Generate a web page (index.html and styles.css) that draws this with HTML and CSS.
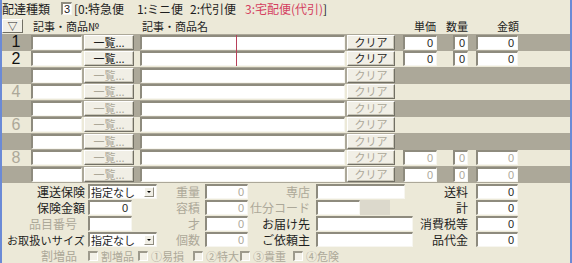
FILE: index.html
```html
<!DOCTYPE html>
<html lang="ja">
<head>
  <meta charset="UTF-8">
  <title>配達伝票</title>
  <link rel="stylesheet" href="styles.css">
</head>
<body>
  <div class="app">
    <div class="topbar">
      <span class="top-label">配達種類</span>
      <span class="field kind-field">3</span>
      <span class="kind k0">[0:特急便</span>
      <span class="kind k1">1:ミニ便</span>
      <span class="kind k2">2:代引便</span>
      <span class="kind k3"><span class="red">3:宅配便(代引)</span>]</span>
    </div>

    <div class="head">
      <span class="sort-btn">▽</span>
      <span class="h-code">記事・商品№</span>
      <span class="h-name">記事・商品名</span>
      <span class="h-price">単価</span>
      <span class="h-qty">数量</span>
      <span class="h-amount">金額</span>
    </div>

    <div class="rows">
      <span class="margin-line"></span>
      <div class="row band">
        <span class="num">1</span>
        <span class="field code"></span>
        <span class="btn list">一覧...</span>
        <span class="field name"></span>
        <span class="btn clear">クリア</span>
        <span class="field price">0</span>
        <span class="field qty">0</span>
        <span class="field amount">0</span>
      </div>
      <div class="row">
        <span class="num">2</span>
        <span class="field code"></span>
        <span class="btn list">一覧...</span>
        <span class="field name"></span>
        <span class="btn clear">クリア</span>
        <span class="field price">0</span>
        <span class="field qty">0</span>
        <span class="field amount">0</span>
      </div>
      <div class="row band">
        <span class="num"></span>
        <span class="field code"></span>
        <span class="btn list off">一覧...</span>
        <span class="field name"></span>
        <span class="btn clear off">クリア</span>
      </div>
      <div class="row">
        <span class="num off">4</span>
        <span class="field code"></span>
        <span class="btn list off">一覧...</span>
        <span class="field name"></span>
        <span class="btn clear off">クリア</span>
      </div>
      <div class="row band">
        <span class="num"></span>
        <span class="field code"></span>
        <span class="btn list off">一覧...</span>
        <span class="field name"></span>
        <span class="btn clear off">クリア</span>
      </div>
      <div class="row">
        <span class="num off">6</span>
        <span class="field code"></span>
        <span class="btn list off">一覧...</span>
        <span class="field name"></span>
        <span class="btn clear off">クリア</span>
      </div>
      <div class="row band">
        <span class="num"></span>
        <span class="field code"></span>
        <span class="btn list off">一覧...</span>
        <span class="field name"></span>
        <span class="btn clear off">クリア</span>
      </div>
      <div class="row">
        <span class="num off">8</span>
        <span class="field code"></span>
        <span class="btn list off">一覧...</span>
        <span class="field name"></span>
        <span class="btn clear off">クリア</span>
        <span class="field price off">0</span>
        <span class="field qty off">0</span>
        <span class="field amount off">0</span>
      </div>
      <div class="row band">
        <span class="num"></span>
        <span class="field code"></span>
        <span class="btn list off">一覧...</span>
        <span class="field name"></span>
        <span class="btn clear off">クリア</span>
        <span class="field price off">0</span>
        <span class="field qty off">0</span>
        <span class="field amount off">0</span>
      </div>
    </div>

    <div class="extra">
      <div class="xrow">
        <span class="lab1">運送保険</span>
        <span class="cell1"><span class="select"><span class="sel-text">指定なし</span><span class="arrow"></span></span></span>
        <span class="lab2 gray">重量</span>
        <span class="field f2 off">0</span>
        <span class="lab3 gray">専店</span>
        <span class="cell3"><span class="field f3 wide-a"></span></span>
        <span class="lab4">送料</span>
        <span class="field f4">0</span>
      </div>
      <div class="xrow">
        <span class="lab1">保険金額</span>
        <span class="cell1"><span class="field short">0</span></span>
        <span class="lab2 gray">容積</span>
        <span class="field f2 off">0</span>
        <span class="lab3 gray">仕分コード</span>
        <span class="cell3"><span class="field f3 sort-code"></span><span class="sort-name"></span></span>
        <span class="lab4">計</span>
        <span class="field f4">0</span>
      </div>
      <div class="xrow">
        <span class="lab1 gray">品目番号</span>
        <span class="cell1"><span class="field short"></span></span>
        <span class="lab2 gray">才</span>
        <span class="field f2 off">0</span>
        <span class="lab3">お届け先</span>
        <span class="cell3"><span class="field f3 wide-b"></span></span>
        <span class="lab4">消費税等</span>
        <span class="field f4">0</span>
      </div>
      <div class="xrow">
        <span class="lab1 size-label">お取扱いサイズ</span>
        <span class="cell1"><span class="select"><span class="sel-text">指定なし</span><span class="arrow"></span></span></span>
        <span class="lab2 gray">個数</span>
        <span class="field f2 off">0</span>
        <span class="lab3">ご依頼主</span>
        <span class="cell3"><span class="field f3 wide-b"></span></span>
        <span class="lab4">品代金</span>
        <span class="field f4">0</span>
      </div>
      <div class="xrow">
        <span class="lab1 gray">割増品</span>
        <span class="chk c1"><span class="box"></span>割増品</span>
        <span class="chk c2"><span class="box"></span>①易損</span>
        <span class="chk c3"><span class="box"></span>②特大</span>
        <span class="chk c4"><span class="box"></span>③貴重</span>
        <span class="chk c5"><span class="box"></span>④危険</span>
      </div>
    </div>
  </div>
</body>
</html>
```

FILE: styles.css
```css
body {
  margin: 0;
  background-color: #ece9d8;
}

.app {
  width: 572px;
  height: 263px;
  box-sizing: border-box;
  border-left: 2px solid #6b8ad6;
  border-right: 2px solid #6b8ad6;
  background-color: #ece9d8;
  font-family: "Noto Sans CJK JP", sans-serif;
  font-size: 12px;
  line-height: 14px;
  color: #1e1e1e;
  white-space: nowrap;
  overflow: hidden;
}

/* generic sunken text box */
.field {
  display: block;
  box-sizing: border-box;
  height: 15px;
  background-color: #ffffff;
  border-top: 2px solid #8e8b7e;
  border-left: 2px solid #8e8b7e;
  border-right: 1px solid #f7f6f0;
  border-bottom: 1px solid #f7f6f0;
  font-family: "Liberation Sans", sans-serif;
  font-size: 11px;
  line-height: 12px;
  text-align: right;
  padding-right: 3px;
  color: #1e1e1e;
  flex-shrink: 0;
}

.field.off {
  color: #aca899;
}

/* raised button */
.btn {
  display: block;
  box-sizing: border-box;
  height: 15px;
  background-color: #f1efe6;
  border: 1px solid;
  border-color: #ffffff #716f64 #716f64 #ffffff;
  box-shadow: inset -1px -1px 0 #c9c6b8;
  font-size: 11px;
  line-height: 12px;
  text-align: center;
  flex-shrink: 0;
}

.btn.off {
  color: #aca899;
}

/* top bar */
.topbar {
  display: flex;
  align-items: center;
  height: 17px;
}

.top-label {
  width: 59px;
}

.kind-field {
  width: 11px;
  height: 13px;
  text-align: left;
  padding: 0 0 0 1px;
  line-height: 10px;
}

.kind {
  flex-shrink: 0;
}

.k0 {
  margin-left: 2px;
  width: 63px;
}

.k1 {
  width: 53px;
}

.k2 {
  width: 55px;
}

.red {
  color: #d4405f;
}

/* header */
.head {
  display: flex;
  align-items: center;
  height: 17px;
  font-size: 11px;
}

.sort-btn {
  box-sizing: border-box;
  width: 21px;
  height: 14px;
  border: 1px solid;
  border-color: #ffffff #716f64 #716f64 #ffffff;
  background-color: #f1efe6;
  font-size: 10px;
  line-height: 11px;
  text-align: center;
}

.h-code {
  margin-left: 10px;
  width: 109px;
}

.h-name {
  width: 272px;
}

.h-price {
  width: 32px;
}

.h-qty {
  width: 51px;
}

/* detail rows */
.rows {
  position: relative;
}

.margin-line {
  position: absolute;
  left: 234px;
  top: 1px;
  width: 1px;
  height: 31px;
  background-color: #b8405a;
}

.row {
  display: flex;
  align-items: center;
  height: 16.5px;
}

.row.band {
  background-color: #aca899;
}

.num {
  width: 28px;
  height: 16px;
  text-align: center;
  font-family: "Liberation Sans", sans-serif;
  font-size: 16px;
  line-height: 16px;
  color: #111111;
}

.num.off {
  color: #aca899;
}

.code {
  margin-left: 1px;
  width: 51px;
}

.list {
  margin-left: 2px;
  width: 50px;
}

.name {
  margin-left: 6px;
  width: 205px;
}

.clear {
  margin-left: 2px;
  width: 48px;
}

.price {
  margin-left: 8px;
  width: 34px;
}

.qty {
  margin-left: 16px;
  width: 15px;
  padding-right: 2px;
}

.amount {
  margin-left: 8px;
  width: 42px;
}

/* lower form */
.extra {
  padding-top: 1px;
}

.xrow {
  display: flex;
  align-items: center;
  height: 16px;
}

.gray {
  color: #aca899;
}

.lab1 {
  width: 83px;
  text-align: right;
  margin-right: 3px;
  flex-shrink: 0;
}

.lab1.gray {
  padding-right: 8px;
  box-sizing: border-box;
}

.size-label {
  font-size: 11px;
  letter-spacing: 0.2px;
}

.cell1 {
  width: 69px;
  flex-shrink: 0;
}

.short {
  width: 44px;
}

.select {
  display: flex;
  align-items: center;
  box-sizing: border-box;
  width: 69px;
  height: 15px;
  background-color: #ffffff;
  border-top: 2px solid #8e8b7e;
  border-left: 2px solid #8e8b7e;
  border-right: 1px solid #f7f6f0;
  border-bottom: 1px solid #f7f6f0;
}

.sel-text {
  flex: 1;
  font-size: 11px;
  line-height: 12px;
  padding-left: 1px;
}

.arrow {
  box-sizing: border-box;
  width: 10px;
  height: 10px;
  margin-right: 2px;
  background-color: #f1efe6;
  border: 1px solid;
  border-color: #ffffff #8e8b7e #8e8b7e #ffffff;
  position: relative;
}

.arrow::after {
  content: "";
  position: absolute;
  left: 2px;
  top: 3px;
  border-left: 2px solid transparent;
  border-right: 2px solid transparent;
  border-top: 2px solid #000000;
}

.lab2 {
  width: 45px;
  box-sizing: border-box;
  padding-right: 2px;
  text-align: right;
  margin-right: 3px;
  flex-shrink: 0;
}

.f2 {
  width: 43px;
}

.lab3 {
  width: 62px;
  text-align: right;
  margin-right: 6px;
  flex-shrink: 0;
}

.cell3 {
  display: flex;
  width: 97px;
  flex-shrink: 0;
}

.wide-a {
  width: 89px;
}

.wide-b {
  width: 97px;
}

.sort-code {
  width: 44px;
}

.sort-name {
  width: 30px;
  height: 15px;
  background-color: #dcd9cc;
}

.lab4 {
  width: 55px;
  text-align: right;
  margin-right: 8px;
  flex-shrink: 0;
}

.f4 {
  width: 42px;
}

/* disabled check boxes */
.chk {
  display: flex;
  align-items: center;
  color: #aca899;
  font-size: 11px;
  flex-shrink: 0;
}

.box {
  box-sizing: border-box;
  width: 10px;
  height: 10px;
  margin-right: 3px;
  background-color: #f3f1e8;
  border-top: 2px solid #9d9a8c;
  border-left: 2px solid #9d9a8c;
  border-right: 1px solid #ffffff;
  border-bottom: 1px solid #ffffff;
  flex-shrink: 0;
}

.c1 {
  width: 50px;
}

.c2 {
  width: 55px;
}

.c3 {
  width: 47px;
}

.c4 {
  width: 53px;
}
```
